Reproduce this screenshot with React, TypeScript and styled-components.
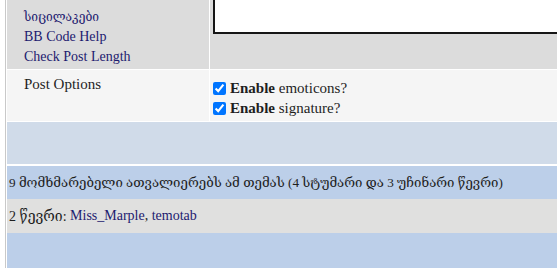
import React from "react";
import styled, { createGlobalStyle } from "styled-components";

const Global = createGlobalStyle`
  html, body {
    margin: 0;
    padding: 0;
    background: #fff;
    overflow: hidden;
  }
  body {
    font-family: "Liberation Serif", "DejaVu Serif", serif;
    font-size: 14px;
    color: #1e1e1e;
  }
`;

const Page = styled.div`
  width: 600px;
  margin-left: 5px;
  border-left: 1px solid #c9c9c9;
  padding-left: 1px;
  background: #fff;
`;

const FormGrid = styled.div`
  display: grid;
  grid-template-columns: 202px 1fr;
  column-gap: 1px;
  row-gap: 1px;
`;

const Cell = styled.div<{ $bg: string; $h: number }>`
  background: ${(p) => p.$bg};
  height: ${(p) => p.$h}px;
  box-sizing: border-box;
`;

const LabelCell = styled(Cell)`
  padding: 7px 0 0 17px;
  line-height: 20px;
`;

const LinkList = styled.div`
  display: flex;
  flex-direction: column;
`;

const Link = styled.a<{ $small?: boolean }>`
  color: #1d1a6f;
  text-decoration: none;
  font-size: ${(p) => (p.$small ? "12px" : "14px")};
`;

const EditorCell = styled(Cell)`
  padding-left: 3px;
`;

const TextBox = styled.div`
  height: 34px;
  border: 2px solid #161616;
  border-top: none;
  border-right: none;
  background: #fff;
  box-sizing: border-box;
`;

const OptionTitle = styled.div`
  padding: 5px 0 0 17px;
  line-height: 18px;
  font-size: 15px;
`;

const Options = styled.div`
  display: flex;
  flex-direction: column;
  gap: 2px;
  padding: 9px 0 0 3px;
`;

const Option = styled.label`
  display: flex;
  align-items: center;
  gap: 4px;
  line-height: 18px;
  font-size: 15px;
  input {
    margin: 0;
    width: 13px;
    height: 13px;
    accent-color: #0075ff;
  }
  b {
    font-weight: 700;
  }
`;

const Spacer = styled.div`
  height: 42px;
  margin-top: 1px;
  background: #d0dbe9;
  border-bottom: 2px solid #fff;
`;

const InfoRow = styled.div<{ $bg: string; $h: number; $size?: number }>`
  background: ${(p) => p.$bg};
  height: ${(p) => p.$h}px;
  font-size: ${(p) => p.$size ?? 14}px;
  display: flex;
  align-items: center;
  padding-left: 2px;
  white-space: nowrap;
`;

const Member = styled.a`
  color: #1d1a6f;
  text-decoration: none;
`;

export default function App() {
  return (
    <>
      <Global />
      <Page>
        <FormGrid>
          <LabelCell $bg="#dcdcdc" $h={69}>
            <LinkList>
              <Link href="#" $small>
                სიცილაკები
              </Link>
              <Link href="#">BB Code Help</Link>
              <Link href="#">Check Post Length</Link>
            </LinkList>
          </LabelCell>
          <EditorCell $bg="#dcdcdc" $h={69}>
            <TextBox />
          </EditorCell>
          <Cell $bg="#f5f5f5" $h={51}>
            <OptionTitle>Post Options</OptionTitle>
          </Cell>
          <Cell $bg="#f5f5f5" $h={51}>
            <Options>
              <Option>
                <input type="checkbox" defaultChecked />
                <span>
                  <b>Enable</b> emoticons?
                </span>
              </Option>
              <Option>
                <input type="checkbox" defaultChecked />
                <span>
                  <b>Enable</b> signature?
                </span>
              </Option>
            </Options>
          </Cell>
        </FormGrid>
        <Spacer />
        <InfoRow $bg="#bccfe9" $h={33} $size={13.2}>
          9 მომხმარებელი ათვალიერებს ამ თემას (4 სტუმარი და 3 უჩინარი წევრი)
        </InfoRow>
        <InfoRow $bg="#e0e0df" $h={34}>
          2 წევრი:&nbsp;<Member href="#">Miss_Marple</Member>,&nbsp;
          <Member href="#">temotab</Member>
        </InfoRow>
        <InfoRow $bg="#bccfe9" $h={35} />
      </Page>
    </>
  );
}
